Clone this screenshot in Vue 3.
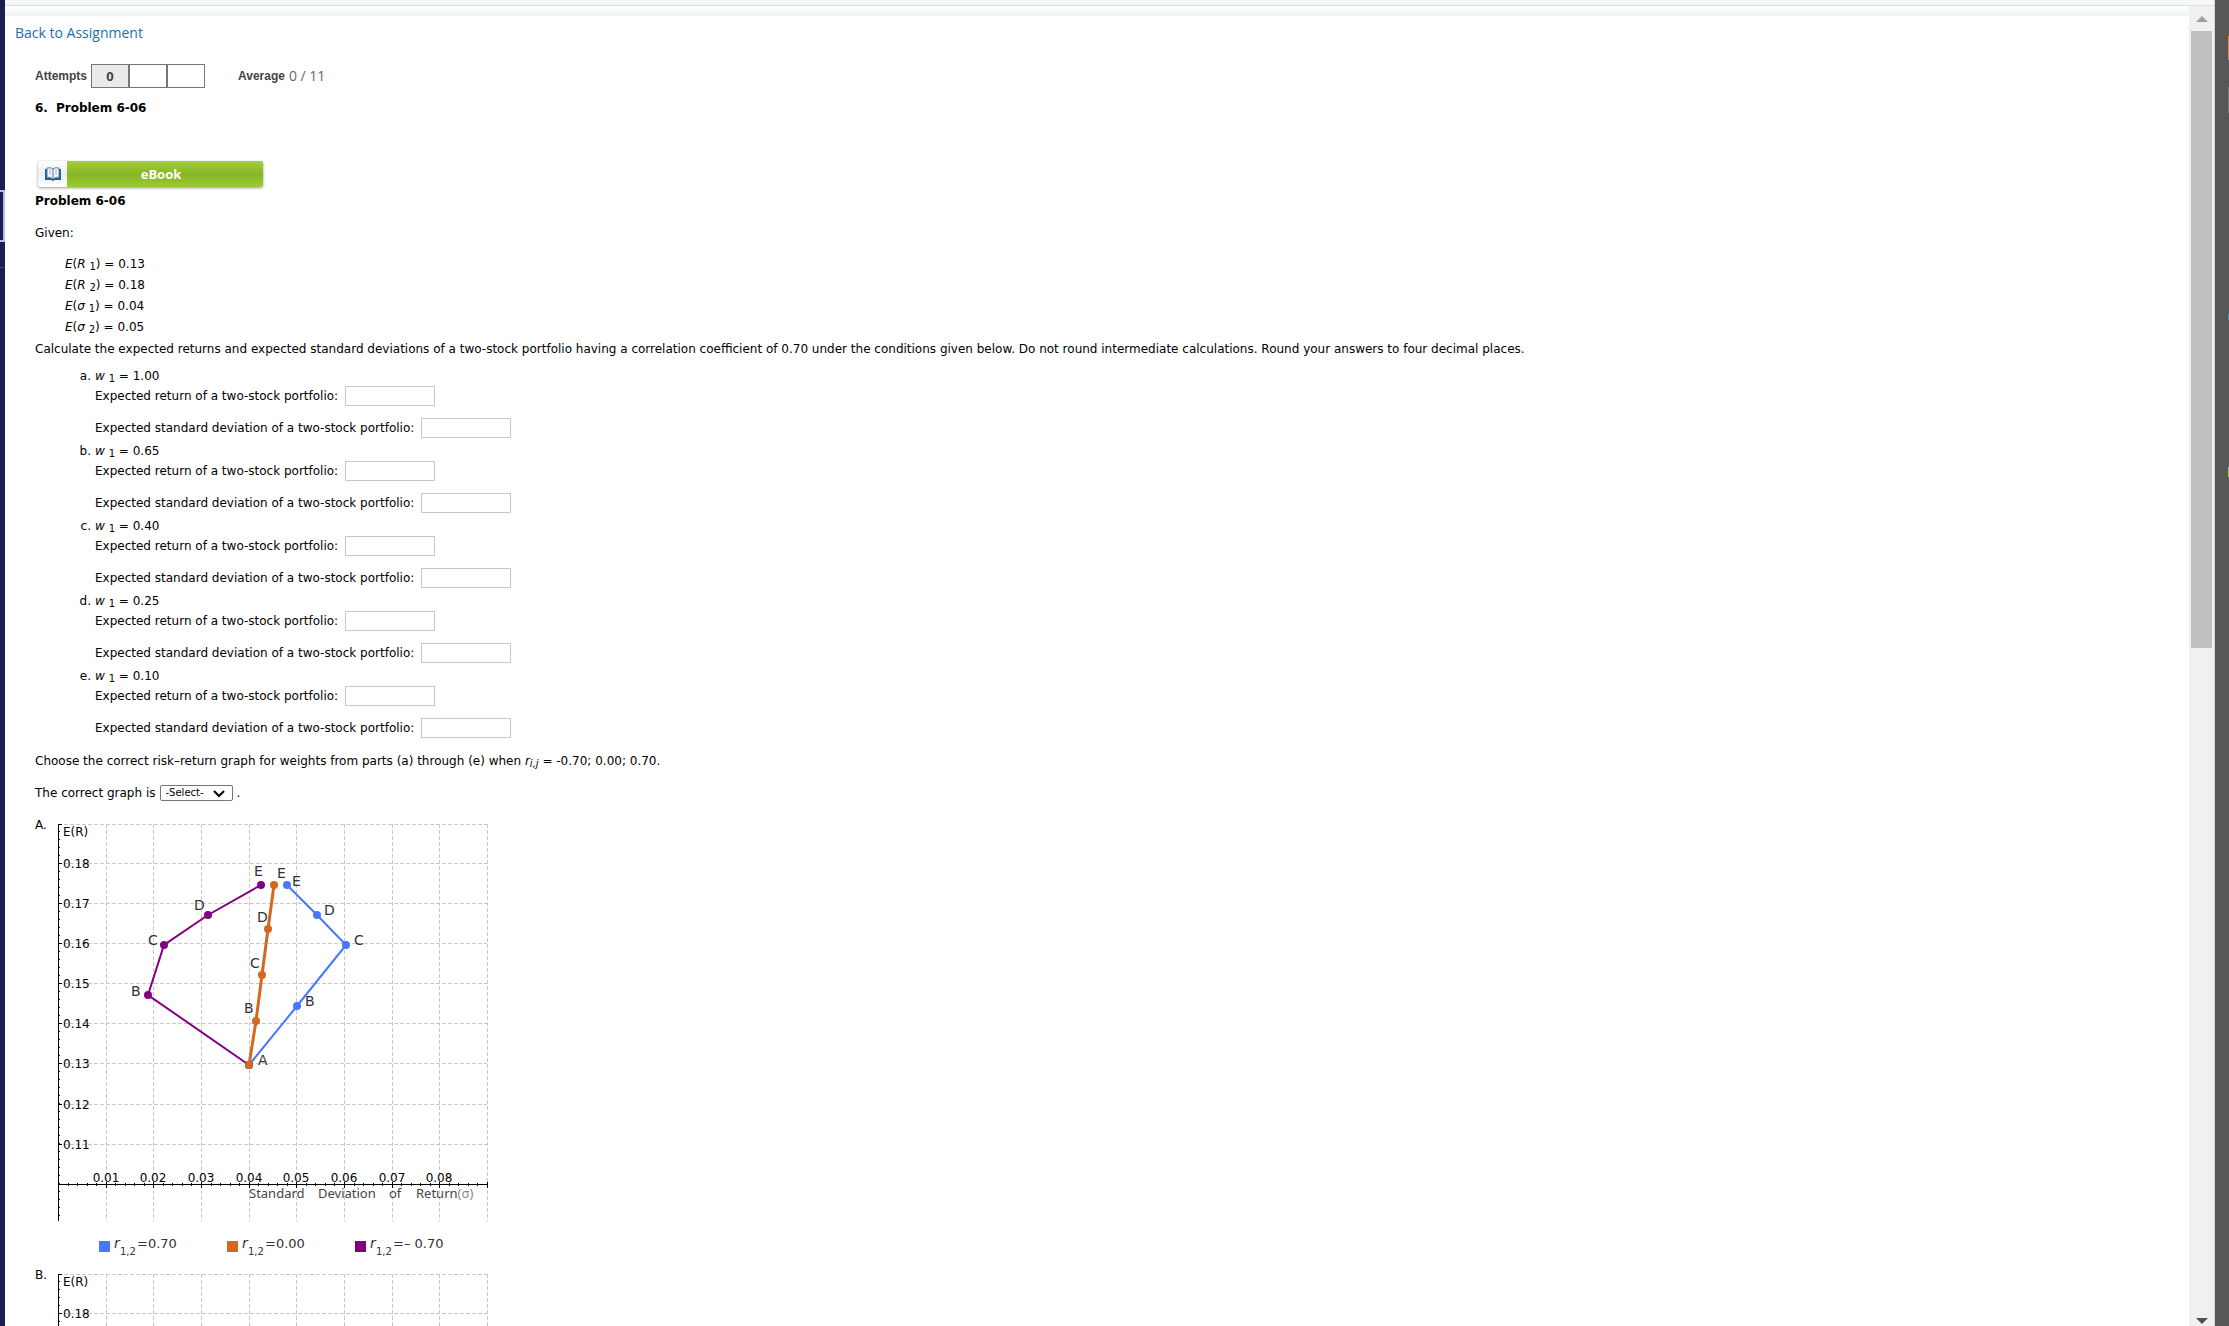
<script setup>
const givens = [
  { sym: 'R', sub: 1, value: '0.13' },
  { sym: 'R', sub: 2, value: '0.18' },
  { sym: 'σ', sub: 1, value: '0.04' },
  { sym: 'σ', sub: 2, value: '0.05' },
]

const parts = [
  { id: 'a', weight: '1.00' },
  { id: 'b', weight: '0.65' },
  { id: 'c', weight: '0.40' },
  { id: 'd', weight: '0.25' },
  { id: 'e', weight: '0.10' },
]

const gridX = [48, 95, 143, 191, 238, 286, 334, 381, 429]
const gridY = [0, 39, 79, 119, 159, 199, 239, 280, 320]
const xLabels = ['0.01', '0.02', '0.03', '0.04', '0.05', '0.06', '0.07', '0.08']
const yLabels = ['0.18', '0.17', '0.16', '0.15', '0.14', '0.13', '0.12', '0.11']

// Minor ticks: five per grid step on both axes.
const yTicks = Array.from({ length: 49 }, (_, i) => i * 8 + 7).filter((y) => y < 397)
const xTicks = Array.from({ length: 45 }, (_, i) => Math.round(((i + 1) * 429) / 45))

const series = [
  {
    color: '#4876ff',
    width: 2,
    points: [[191, 241], [239, 182], [288, 121], [259, 91], [229, 61]],
    labels: [['B', 247, 182], ['C', 296, 121], ['D', 266, 91], ['E', 234, 62]],
  },
  {
    color: '#800080',
    width: 2,
    points: [[191, 241], [90, 171], [106, 121], [150, 91], [203, 61]],
    labels: [['B', 73, 172], ['C', 90, 121], ['D', 136, 86], ['E', 196, 52]],
  },
  {
    color: '#d2691e',
    width: 3,
    points: [[191, 241], [198, 197], [204, 151], [210, 105], [216, 61]],
    labels: [['A', 200, 241], ['B', 186, 189], ['C', 192, 144], ['D', 199, 98], ['E', 219, 54]],
  },
]

const legend = [
  { color: '#4876ff', x: 41, text: '=0.70' },
  { color: '#d2691e', x: 169, text: '=0.00' },
  { color: '#800080', x: 297, text: '=– 0.70' },
]

const graphs = [
  { id: 'A', series, yLabels, xLabels, named: true, legend },
  { id: 'B', series: [], yLabels: yLabels.slice(0, 1), xLabels: [], named: false, legend: [] },
]

const toPolyline = (points) => points.map((p) => p.join(',')).join(' ')
</script>

<template>
  <div class="shell">
    <aside class="nav-edge">
      <span class="nav-selected"></span>
      <span class="nav-divider"></span>
    </aside>

    <div class="window">
      <div class="top-bar"></div>
      <div class="viewport">
        <main class="page">
          <a class="back" href="#">Back to Assignment</a>

          <div class="content">
            <div class="attempts">
              <span class="caption">Attempts</span>
              <ul class="boxes">
                <li class="used">0</li>
                <li></li>
                <li></li>
              </ul>
              <span class="caption average">Average</span>
              <span class="score">0 / 11</span>
            </div>

            <h1 class="title"><span>6.</span><span>Problem 6-06</span></h1>

            <button class="ebook" type="button">
              <span class="ebook-icon">
                <svg width="16" height="14" viewBox="0 0 16 14" aria-hidden="true">
                  <path d="M0 2h2v9h4l2 1 2-1h4V2h2v11H10l-2 1-2-1H0z" fill="#245d8c" />
                  <path d="M2 1Q6 0 8 2Q10 0 14 1V10Q10 10 8 12Q6 10 2 10Z" fill="#fafafa" stroke="#4f7fa8" />
                  <path d="M8 2V11" stroke="#3f6f9d" />
                  <path d="M4 3h2M4 5h2M4 7h2M10 3h2M10 5h2M10 7h2" stroke="#a9a9a9" />
                </svg>
              </span>
              <span class="ebook-label">eBook</span>
            </button>

            <h2 class="subtitle">Problem 6-06</h2>
            <p class="given">Given:</p>

            <ul class="givens">
              <li v-for="g in givens" :key="g.sym + g.sub">
                <i>E</i>(<i>{{ g.sym }}</i> <sub>{{ g.sub }}</sub>) = {{ g.value }}
              </li>
            </ul>

            <p class="task">
              Calculate the expected returns and expected standard deviations of a two-stock portfolio having a
              correlation coefficient of 0.70 under the conditions given below. Do not round intermediate
              calculations. Round your answers to four decimal places.
            </p>

            <ol class="parts">
              <li v-for="p in parts" :key="p.id">
                <span class="marker">{{ p.id }}.</span>
                <div class="part">
                  <p class="weight"><i>w</i> <sub>1</sub> = {{ p.weight }}</p>
                  <div class="field">
                    <label :for="'ret-' + p.id">Expected return of a two-stock portfolio:</label>
                    <input :id="'ret-' + p.id" type="text" />
                  </div>
                  <div class="field">
                    <label :for="'dev-' + p.id">Expected standard deviation of a two-stock portfolio:</label>
                    <input :id="'dev-' + p.id" type="text" />
                  </div>
                </div>
              </li>
            </ol>

            <p class="choose">
              Choose the correct risk–return graph for weights from parts (a) through (e) when
              <i>r<sub>i,j</sub></i> = -0.70; 0.00; 0.70.
            </p>

            <div class="answer">
              <label for="graph">The correct graph is</label>
              <span class="select-wrap">
                <select id="graph">
                  <option>-Select-</option>
                  <option>A</option>
                  <option>B</option>
                  <option>C</option>
                  <option>D</option>
                </select>
                <svg class="chevron" width="12" height="8" viewBox="0 0 12 8" aria-hidden="true">
                  <path d="M1 1L6 6L11 1" fill="none" stroke="#000" stroke-width="2" />
                </svg>
              </span>
              <span>.</span>
            </div>

            <section v-for="g in graphs" :key="g.id" class="graph">
              <span class="graph-id">{{ g.id }}.</span>
              <svg class="plot" width="440" height="441" viewBox="0 0 440 441" role="img">
                <g class="grid">
                  <line v-for="x in gridX" :key="'x' + x" :x1="x" y1="0" :x2="x" y2="397" />
                  <line v-for="y in gridY" :key="'y' + y" x1="0" :y1="y" x2="429" :y2="y" />
                </g>
                <g class="axes">
                  <line x1="0" y1="0" x2="0" y2="397" />
                  <line x1="0" y1="360" x2="429" y2="360" />
                  <line v-for="y in yTicks" :key="'ty' + y" x1="0" :y1="y" x2="2" :y2="y" />
                  <line v-for="y in gridY" :key="'my' + y" x1="0" :y1="y" x2="4" :y2="y" />
                  <line v-for="x in xTicks" :key="'tx' + x" :x1="x" y1="359" :x2="x" y2="362" />
                  <line v-for="x in gridX" :key="'mx' + x" :x1="x" y1="358" :x2="x" y2="364" />
                </g>
                <g class="scale">
                  <text x="5" y="12">E(R)</text>
                  <text v-for="(t, i) in g.yLabels" :key="'yl' + t" x="5" :y="gridY[i + 1] + 5">{{ t }}</text>
                  <text v-for="(t, i) in g.xLabels" :key="'xl' + t" class="mid" :x="gridX[i]" y="358">{{ t }}</text>
                </g>
                <g v-if="g.named" class="axis-name">
                  <text x="191" y="374">Standard</text>
                  <text x="260" y="374">Deviation</text>
                  <text x="331" y="374">of</text>
                  <text x="358" y="374">Return<tspan class="faint">(σ)</tspan></text>
                </g>
                <g v-for="s in g.series" :key="s.color">
                  <polyline :points="toPolyline(s.points)" fill="none" :stroke="s.color" :stroke-width="s.width" />
                  <circle v-for="p in s.points" :key="p.join()" :cx="p[0]" :cy="p[1]" r="4" :fill="s.color" />
                  <text v-for="l in s.labels" :key="l[0]" class="point" :x="l[1]" :y="l[2]">{{ l[0] }}</text>
                </g>
                <g v-for="k in g.legend" :key="k.color" class="legend">
                  <rect :x="k.x" y="417" width="11" height="11" :fill="k.color" />
                  <text :x="k.x + 15" y="424"><tspan class="var">r</tspan></text>
                  <text class="index" :x="k.x + 21" y="431">1,2</text>
                  <text :x="k.x + 38" y="424">{{ k.text }}</text>
                </g>
              </svg>
            </section>
          </div>
        </main>

        <div class="scrollbar">
          <span class="arrow up"></span>
          <span class="thumb"></span>
          <span class="arrow down"></span>
        </div>
      </div>
    </div>

    <aside class="dock">
      <span class="dot orange"></span>
      <span class="dot grey"></span>
      <span class="dot blue"></span>
      <span class="dot green"></span>
    </aside>
  </div>
</template>

<style>
body {
  overflow: hidden;
}
</style>

<style scoped>
.shell {
  display: flex;
  height: 100vh;
  overflow: hidden;
  background: #fff;
  color: #000;
  font: 12px/18px Verdana, "DejaVu Sans", sans-serif;
}

p,
h1,
h2,
ul,
ol {
  margin: 0;
  padding: 0;
  list-style: none;
}

.nav-edge {
  flex: none;
  display: flex;
  flex-direction: column;
  box-sizing: border-box;
  width: 5px;
  padding-top: 190px;
  background: #1b1c50;
}

.nav-selected {
  box-sizing: border-box;
  height: 52px;
  border: 2px solid #babae8;
  border-left: 0;
}

.nav-divider {
  height: 1px;
  margin-top: 25px;
  background: #3c3d70;
}

.window {
  flex: 1;
  display: flex;
  flex-direction: column;
  min-width: 0;
  border-right: 1px solid #d4d4d4;
}

.top-bar {
  flex: none;
  height: 5px;
  background: #f7f7f7;
  border-bottom: 1px solid #d8e0e2;
}

.viewport {
  flex: 1;
  display: flex;
  min-height: 0;
}

.page {
  flex: 1;
  min-width: 0;
  overflow: hidden;
  padding-top: 17px;
  background: linear-gradient(#fff, #eef3f5) 0 1px / 100% 9px no-repeat;
}

.back {
  display: block;
  margin-left: 10px;
  color: #1d6fa5;
  font: 14px/20px "Open Sans", sans-serif;
  text-decoration: none;
}

.content {
  padding-left: 30px;
}

.attempts {
  display: flex;
  align-items: center;
  height: 24px;
  margin-top: 21px;
}

.caption {
  color: #444;
  font: bold 12px/18px "Liberation Sans", Arial, sans-serif;
}

.boxes {
  display: flex;
  margin-left: 4px;
}

.boxes li {
  box-sizing: border-box;
  width: 38px;
  height: 24px;
  border: 1px solid #777;
  color: #444;
  font: bold 13px/22px "Open Sans", sans-serif;
  text-align: center;
}

.boxes .used {
  background: #ebebeb;
}

.average {
  margin-left: 33px;
}

.score {
  margin-left: 4px;
  color: #666;
  font: 14px/18px "Open Sans", sans-serif;
}

.title,
.subtitle {
  font-size: 12px;
  line-height: 18px;
}

.title {
  display: flex;
  gap: 8px;
  margin-top: 11px;
}

.ebook {
  display: flex;
  width: 225px;
  height: 26px;
  margin: 44px 0 0 3px;
  padding: 0;
  border: 0;
  border-radius: 2px;
  overflow: hidden;
  background: linear-gradient(#a2cf3f, #86b526 50%, #9ccb2f);
  box-shadow: 0 1px 3px rgba(0, 0, 0, 0.4);
}

.ebook-icon {
  display: flex;
  align-items: center;
  justify-content: center;
  width: 29px;
  height: 26px;
  background: linear-gradient(#fff, #ececec 50%, #fff);
}

.ebook-label {
  flex: 1;
  padding-right: 8px;
  color: #fff;
  font: bold 13px/26px "Open Sans", sans-serif;
  text-align: center;
}

.subtitle {
  margin-top: 5px;
}

.given {
  margin-top: 14px;
}

.givens {
  margin: 12px 0 0 30px;
  line-height: 21px;
}

sub {
  font-size: 10px;
  line-height: 0;
  vertical-align: -2px;
}

.task {
  margin-top: 2px;
}

.parts {
  margin-top: 9px;
}

.parts li {
  display: flex;
  gap: 4px;
  height: 75px;
  line-height: 19px;
}

.marker {
  width: 56px;
  text-align: right;
}

.weight {
  height: 19px;
}

.field {
  display: flex;
  align-items: center;
  gap: 7px;
  height: 20px;
  margin-bottom: 12px;
}

.field input {
  box-sizing: border-box;
  width: 90px;
  height: 20px;
  padding: 1px 4px;
  border: 1px solid #c8c8c8;
  background: #fff;
  font: inherit;
}

.choose {
  margin-top: 10px;
}

.answer {
  display: flex;
  align-items: center;
  gap: 4px;
  height: 18px;
  margin-top: 14px;
}

.select-wrap {
  position: relative;
  display: flex;
}

.select-wrap select {
  appearance: none;
  box-sizing: border-box;
  width: 73px;
  height: 16px;
  padding: 0 0 0 5px;
  border: 1px solid #767676;
  border-radius: 2px;
  background: #fff;
  color: #000;
  font: 10px/14px Verdana, "DejaVu Sans", sans-serif;
}

.chevron {
  position: absolute;
  top: 5px;
  right: 8px;
  pointer-events: none;
}

.graph {
  display: flex;
  height: 450px;
}

.answer + .graph {
  margin-top: 14px;
}

.graph-id {
  width: 23px;
  font-size: 12px;
}

.plot {
  margin-top: 8px;
  overflow: visible;
}

.grid line {
  stroke: #c8c8c8;
  stroke-width: 1px;
  stroke-dasharray: 4 2;
}

.axes line {
  stroke: #000;
  stroke-width: 1px;
}

.grid,
.axes {
  shape-rendering: crispEdges;
}

.scale text {
  font-size: 12px;
}

.scale .mid {
  text-anchor: middle;
}

.axis-name text {
  fill: #444;
  font: 13px "Noto Sans", sans-serif;
}

.axis-name .faint {
  fill: #888;
}

.point {
  fill: #333;
  font-size: 14px;
}

.legend text {
  fill: #333;
  font-size: 13px;
}

.legend .var {
  font-style: italic;
  font-size: 14px;
}

.legend .index {
  font-size: 10px;
}

.scrollbar {
  flex: none;
  display: flex;
  flex-direction: column;
  align-items: center;
  width: 25px;
  padding: 10px 0 2px;
  box-sizing: border-box;
  background: #f0f0f0;
}

.arrow {
  flex: none;
  width: 0;
  height: 0;
  border-left: 6px solid transparent;
  border-right: 6px solid transparent;
}

.up {
  border-bottom: 6px solid #a0a0a0;
}

.down {
  margin-top: auto;
  border-top: 6px solid #505050;
}

.thumb {
  flex: none;
  width: 21px;
  height: calc(47% + 2px);
  margin-top: 9px;
  background: #c0c0c0;
}

.dock {
  flex: none;
  display: flex;
  flex-direction: column;
  align-items: flex-end;
  width: 14px;
  background: #575757;
}

.dot {
  width: 1px;
}

.orange {
  height: 24px;
  margin-top: 36px;
  background: #e08a4c;
}

.grey {
  height: 26px;
  margin-top: 27px;
  background: #7a7a7a;
}

.blue {
  height: 6px;
  margin-top: 201px;
  background: #3b9ac8;
}

.green {
  height: 10px;
  margin-top: 147px;
  background: #9fc665;
}
</style>
